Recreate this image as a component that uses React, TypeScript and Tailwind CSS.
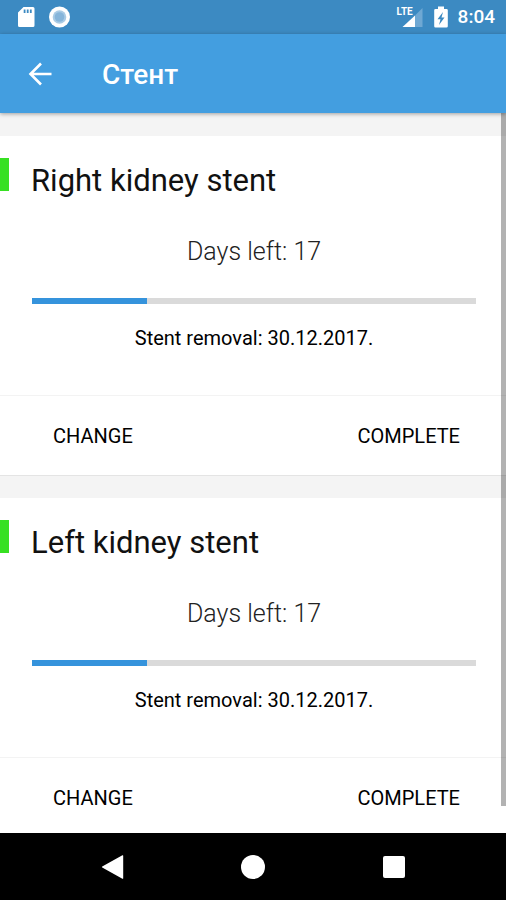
type Stent = {
  id: string;
  name: string;
  daysLeft: number;
  progress: number;
  removal: string;
};

const stents: Stent[] = [
  { id: "right", name: "Right kidney stent", daysLeft: 17, progress: 26, removal: "30.12.2017." },
  { id: "left", name: "Left kidney stent", daysLeft: 17, progress: 26, removal: "30.12.2017." },
];

function StatusBar() {
  return (
    <div className="flex h-[34px] shrink-0 items-center bg-[#3c8ac2] pr-[11px] pl-[17px] text-white">
      <svg aria-hidden viewBox="0 0 18 20" className="h-5 w-[18px]">
        <path
          fill="currentColor"
          fillRule="evenodd"
          d="M6.5 0H16a1.5 1.5 0 0 1 1.500 1.500V18.500A1.500 1.500 0 0 1 16 20H2.500A1.500 1.500 0 0 1 1 18.500V5.500zM6.700 2.500v3.500h1.800V2.500zM9.800 2.500v3.500h1.800V2.500zM12.900 2.500v3.500h1.800V2.500z"
        />
      </svg>
      <svg aria-hidden viewBox="0 0 22 22" className="ml-[13px] size-[22px]">
        <circle cx="11.500" cy="11" r="10.500" fill="#fff" />
        <circle cx="11.500" cy="11" r="6.800" fill="#a9cbe5" />
        <circle cx="11.500" cy="11" r="4.800" fill="#86b5da" />
      </svg>
      <div className="ml-auto flex items-center">
        <div className="relative h-[22px] w-[26px]">
          <svg aria-hidden viewBox="0 0 26 22" className="size-full">
            <path fill="#6fa8d3" d="M25.500 2v19H18V9.500z" />
            <path fill="currentColor" d="M18 9.500V21H5.500z" />
          </svg>
          <span className="absolute top-0 left-0 text-[10px] leading-[12px] font-bold">LTE</span>
        </div>
        <svg aria-hidden viewBox="0 0 14 22" className="ml-[11px] h-[22px] w-[14px]">
          <path
            fill="currentColor"
            fillRule="evenodd"
            d="M4 .500h6V3h2.500a1.300 1.300 0 0 1 1.300 1.300v15.900a1.300 1.300 0 0 1-1.300 1.300h-11A1.300 1.300 0 0 1 .200 20.200V4.300A1.300 1.300 0 0 1 1.500 3H4zM9 6l-5.500 7.200h3L5 19l5.500-7.500h-3z"
          />
        </svg>
        <span className="ml-[10px] text-[19px] leading-6 font-medium">8:04</span>
      </div>
    </div>
  );
}

function AppBar({ title }: { title: string }) {
  return (
    <header className="z-10 flex h-[79px] shrink-0 items-center bg-[#439ee0] pl-[28px] text-white shadow-[0_1px_4px_rgba(0,0,0,0.35)]">
      <button type="button" aria-label="Back" className="size-6">
        <svg aria-hidden viewBox="0 0 24 24" className="size-6" fill="none" stroke="currentColor" strokeWidth="2.600">
          <path d="M23.500 12H3M13 1.500 2.500 12 13 22.500" />
        </svg>
      </button>
      <h1 className="ml-[50px] pt-[2px] text-[28px] leading-8 font-medium">{title}</h1>
    </header>
  );
}

function StentCard({ stent }: { stent: Stent }) {
  return (
    <section className="border-b border-[#e4e4e4] bg-white text-black">
      <div className="flex items-start pt-[22px]">
        <span className="h-[33px] w-[9px] bg-[#37e022]" />
        <h2 className="ml-[22px] text-[31px] leading-[46px] text-[#111]">{stent.name}</h2>
      </div>
      <div className="flex flex-col items-center pr-[30px] pl-8">
        <p className="mt-8 text-[25px] leading-8 font-light text-[#222]">Days left: {stent.daysLeft}</p>
        <div
          role="progressbar"
          aria-label={`${stent.name} progress`}
          aria-valuenow={stent.progress}
          aria-valuemin={0}
          aria-valuemax={100}
          className="mt-[30px] h-[6px] w-full bg-[#dadada]"
        >
          <div className="h-full bg-[#3593dc]" style={{ width: `${stent.progress}%` }} />
        </div>
        <p className="mt-[22px] text-[20px] leading-6">Stent removal: {stent.removal}</p>
      </div>
      <div className="mt-[45px] flex h-20 items-center justify-between border-t border-[#f3f3f3] pr-[46px] pl-[53px] text-[20px] leading-6">
        <button type="button">CHANGE</button>
        <button type="button">COMPLETE</button>
      </div>
    </section>
  );
}

function NavBar() {
  return (
    <nav className="grid h-[67px] shrink-0 grid-cols-3 bg-black px-[42px] text-white">
      <button type="button" aria-label="Back" className="flex items-center justify-center">
        <svg aria-hidden viewBox="0 0 24 24" className="size-6" fill="currentColor">
          <path d="M23.200 .800v22.400q0 .800-.800.500L2.200 12.600q-.700-.600 0-1.200L22.400.300q.800-.300.800.500z" />
        </svg>
      </button>
      <button type="button" aria-label="Home" className="flex items-center justify-center">
        <span className="size-6 rounded-full bg-white" />
      </button>
      <button type="button" aria-label="Recent apps" className="flex items-center justify-center">
        <span className="size-[22px] rounded-[2px] bg-white" />
      </button>
    </nav>
  );
}

export default function App() {
  return (
    <div className="flex h-screen flex-col overflow-hidden font-[Roboto,sans-serif]">
      <StatusBar />
      <AppBar title="Стент" />
      <main className="relative flex-1 overflow-hidden bg-[#f4f4f4]">
        <div className="flex flex-col gap-[22px] pt-[23px]">
          {stents.map((stent) => (
            <StentCard key={stent.id} stent={stent} />
          ))}
        </div>
        <div aria-hidden className="absolute top-0 right-0 bottom-[27px] w-[5px] bg-black/30" />
      </main>
      <NavBar />
    </div>
  );
}
